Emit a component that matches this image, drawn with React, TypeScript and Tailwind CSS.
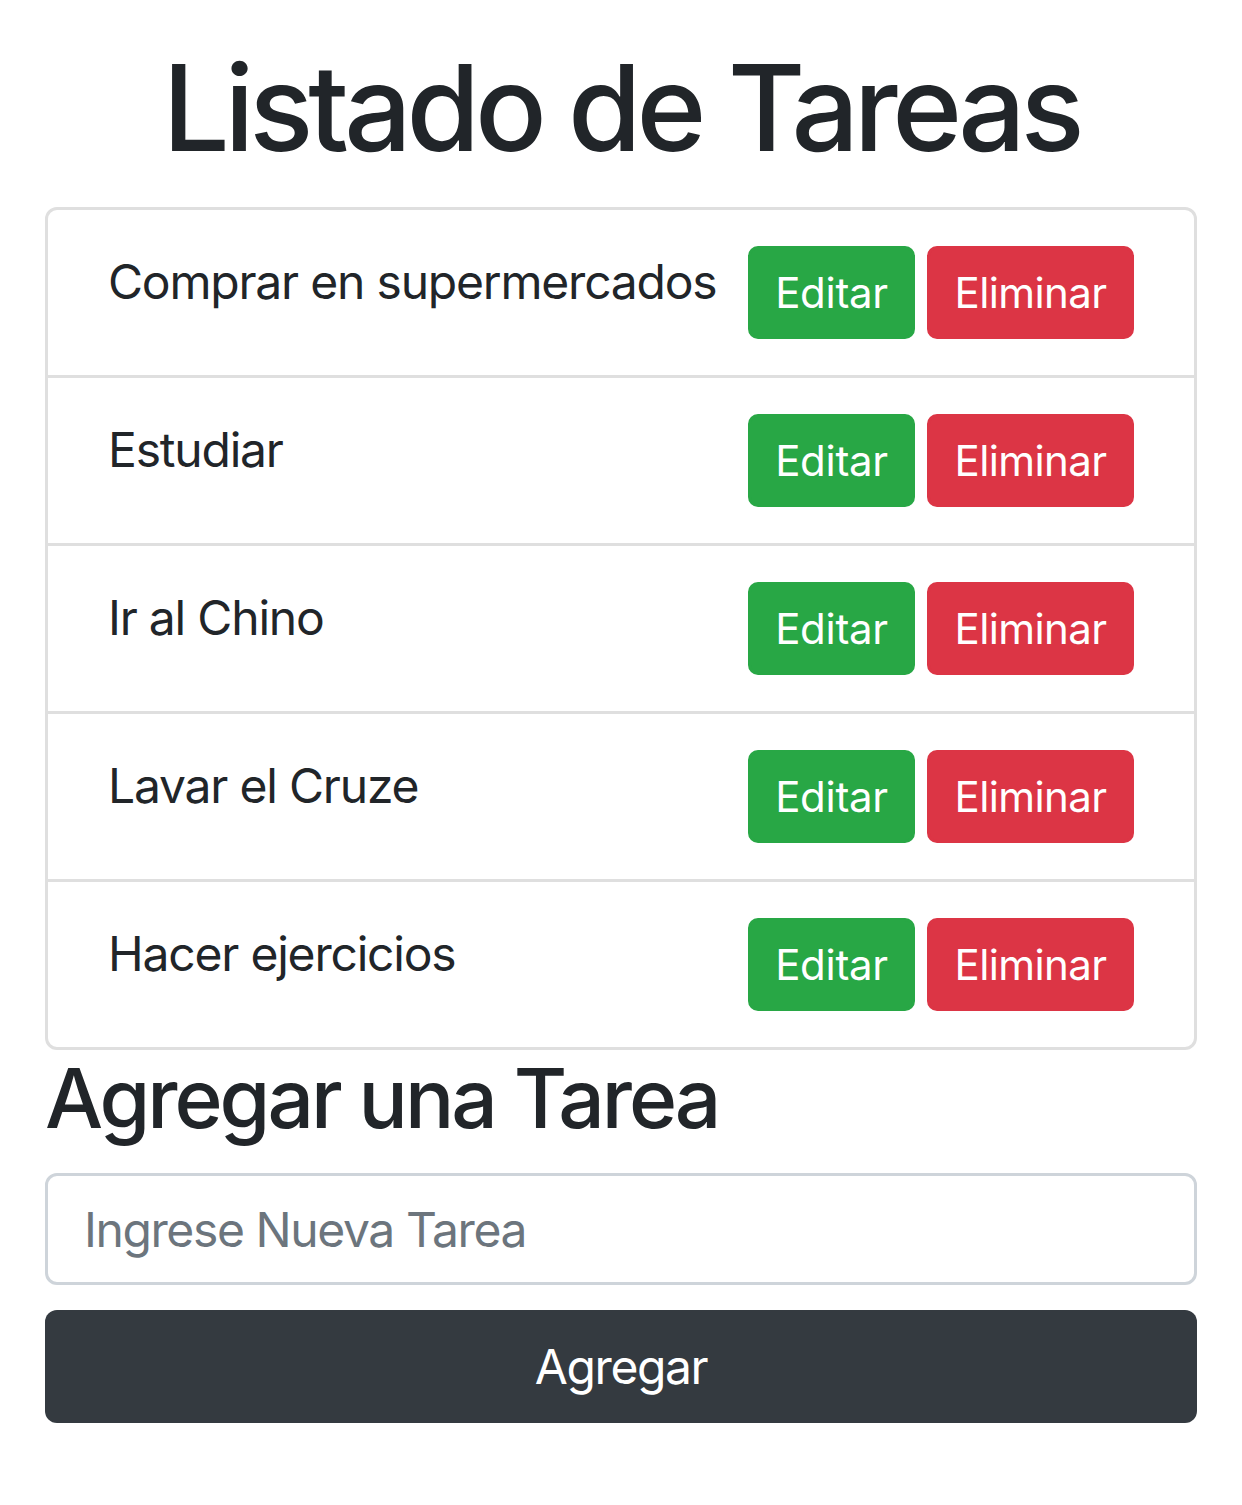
import React from "react";

const tareas = [
  "Comprar en supermercados",
  "Estudiar",
  "Ir al Chino",
  "Lavar el Cruze",
  "Hacer ejercicios",
];

export default function App() {
  return (
    <div className="min-h-screen bg-white font-['Inter',sans-serif] text-[#212529]">
      <div className="px-[45px]">
        <h1 className="pt-[36px] mb-[27px] text-center text-[119px] leading-[144px] font-medium tracking-[-5.2px]">
          Listado de Tareas
        </h1>

        <ul className="rounded-[12px] border-[3px] border-[#dfdfdf]">
          {tareas.map((t, i) => (
            <li
              key={i}
              className={
                "flex items-start justify-between px-[60px] py-[36px] " +
                (i < tareas.length - 1 ? "border-b-[3px] border-[#dfdfdf]" : "")
              }
            >
              <span className="text-[48px] leading-[72px] tracking-[-1.2px]">{t}</span>
              <div className="flex gap-[12px]">
                <button className="h-[93px] w-[167px] rounded-[10px] border-[3px] border-[#28a745] bg-[#28a745] text-[42px] leading-[63px] tracking-[-0.3px] text-white">
                  Editar
                </button>
                <button className="h-[93px] w-[207px] rounded-[10px] border-[3px] border-[#dc3545] bg-[#dc3545] text-[42px] leading-[63px] tracking-[-0.6px] text-white">
                  Eliminar
                </button>
              </div>
            </li>
          ))}
        </ul>

        <h2 className="mb-[25px] text-[82px] leading-[98px] font-medium tracking-[-3px]">
          Agregar una Tarea
        </h2>

        <form className="flex flex-col gap-[25px]" onSubmit={(e) => e.preventDefault()}>
          <input
            type="text"
            placeholder="Ingrese Nueva Tarea"
            className="h-[112px] rounded-[12px] border-[3px] border-[#ced4da] px-[36px] text-[48px] tracking-[-1.4px] text-[#495057] placeholder:text-[#6c757d] focus:outline-none"
          />
          <button
            type="submit"
            className="h-[113px] rounded-[12px] bg-[#343a40] text-[48px] tracking-[-1.4px] text-white"
          >
            Agregar
          </button>
        </form>
      </div>
    </div>
  );
}
